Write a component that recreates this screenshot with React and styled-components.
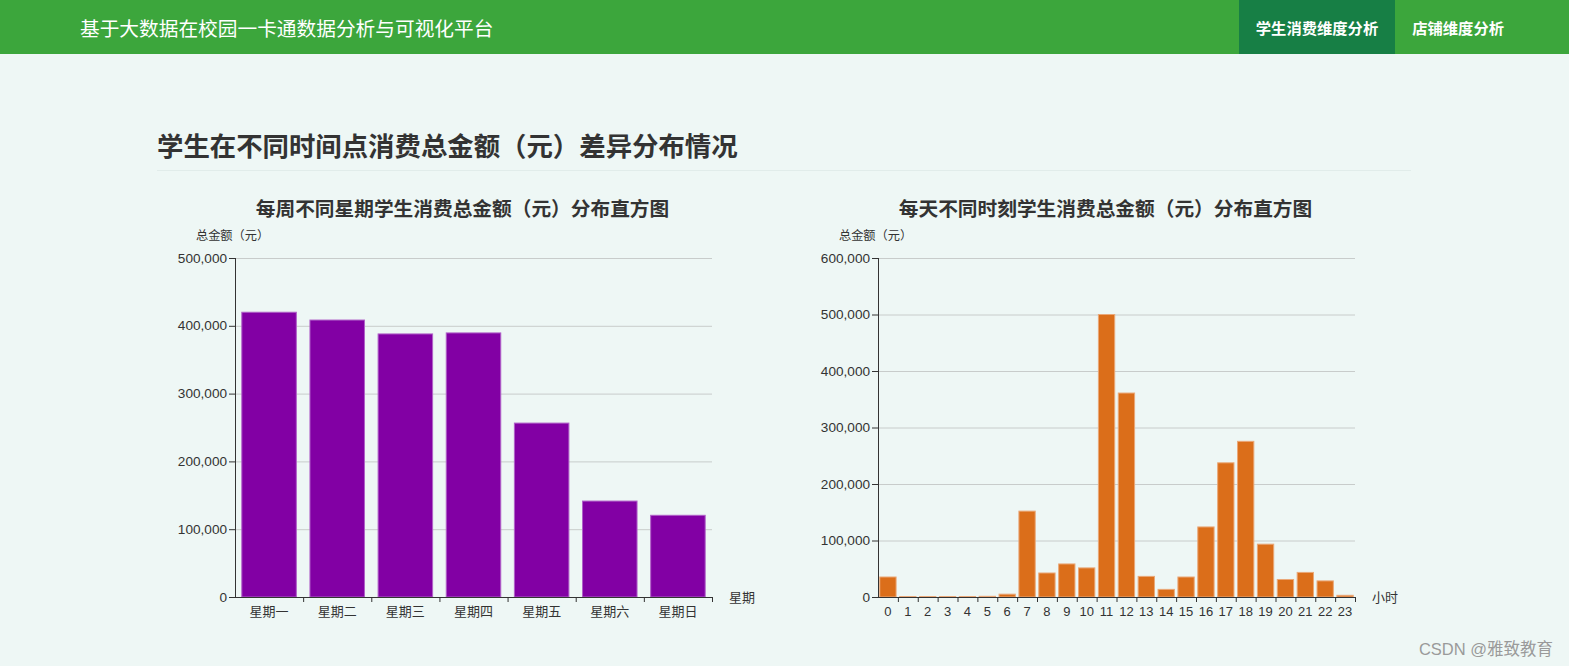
import React from "react";
import styled, { createGlobalStyle } from "styled-components";

const GlobalStyle = createGlobalStyle`
  body {
    margin: 0;
    background: #eef7f5;
    font-family: "Liberation Sans", "Noto Sans CJK SC", sans-serif;
    color: #333;
  }
`;

const Header = styled.header`
  height: 54px;
  background: #3ca63c;
  display: flex;
  align-items: center;
  justify-content: space-between;
  padding-left: 80px;
  padding-right: 48px;
`;

const Brand = styled.div`
  color: #fff;
  font-size: 19.7px;
  font-family: "Noto Sans CJK SC", sans-serif;
`;

const Nav = styled.nav`
  display: flex;
  height: 100%;
`;

const NavItem = styled.a`
  display: flex;
  align-items: center;
  padding: 0 17px;
  height: 100%;
  color: #fff;
  font-weight: bold;
  font-size: 15.3px;
  font-family: "Noto Sans CJK SC", sans-serif;
  background: ${(p) => (p.$active ? "#177f45" : "transparent")};
  cursor: pointer;
`;

const Main = styled.main`
  padding: 0 158px 0 157px;
`;

const Heading = styled.h1`
  margin: 73px 0 0;
  padding-bottom: 7px;
  font-size: 26.4px;
  line-height: 36px;
  font-weight: bold;
  font-family: "Noto Sans CJK SC", sans-serif;
  color: #333;
  border-bottom: 1px solid #e1ecea;
`;

const ChartRow = styled.div`
  display: grid;
  grid-template-columns: 643px 643px;
  margin-left: -16px;
  margin-top: 25px;
`;

const ChartBox = styled.div`
  display: flex;
  flex-direction: column;
`;

const ChartTitle = styled.h3`
  margin: 0;
  text-align: center;
  font-size: 19.7px;
  line-height: 24px;
  font-weight: bold;
  font-family: "Noto Sans CJK SC", sans-serif;
  color: #333;
`;

const Watermark = styled.div`
  position: absolute;
  right: 16px;
  top: 636px;
  font-size: 16.5px;
  color: #9a9a9a;
  font-family: "Liberation Sans", "Noto Sans CJK SC", sans-serif;
`;

const AX = 94;
const GX = 571;
const TOP = 38;
const BOT = 377;

const fmt = (n) => n.toLocaleString("en-US");

const BarChart = ({ data, max, step, color, stroke, xName, gap }) => {
  const band = (GX - AX) / data.length;
  const barW = band * (1 - gap);
  const ticks = [];
  for (let v = 0; v <= max; v += step) ticks.push(v);
  const y = (v) => BOT - (v / max) * (BOT - TOP);
  return (
    <svg width="643" height="420">
      <text x="55" y="17" fontSize="12.2" fill="#333" dominantBaseline="middle" fontFamily="Noto Sans CJK SC, sans-serif">
        总金额（元）
      </text>
      {ticks.map((t) => (
        <g key={t}>
          {t > 0 && <line x1={AX} x2={GX} y1={y(t) + 0.5} y2={y(t) + 0.5} stroke="#c8cccb" />}
          <line x1={AX - 6} x2={AX} y1={y(t) + 0.5} y2={y(t) + 0.5} stroke="#333" />
          <text x={AX - 8} y={y(t) + 1} fontSize="13.6" fill="#333" textAnchor="end" dominantBaseline="middle">
            {fmt(t)}
          </text>
        </g>
      ))}
      {data.map((d, i) => {
        const cx = AX + band * (i + 0.5);
        return (
          <rect
            key={d.label}
            x={cx - barW / 2}
            y={y(d.value)}
            width={barW}
            height={BOT - y(d.value)}
            fill={color}
            stroke={stroke}
            strokeWidth="1"
          />
        );
      })}
      <line x1={AX + 0.5} x2={AX + 0.5} y1={TOP} y2={BOT} stroke="#333" />
      <line x1={AX - 6} x2={GX} y1={BOT + 0.5} y2={BOT + 0.5} stroke="#333" />
      {data.map((d, i) => (
        <g key={"t" + d.label}>
          <line x1={AX + band * (i + 1) + 0.5} x2={AX + band * (i + 1) + 0.5} y1={BOT} y2={BOT + 5} stroke="#333" />
          <text
            x={AX + band * (i + 0.5)}
            y={BOT + 16}
            fontSize="13"
            fill="#333"
            textAnchor="middle"
            dominantBaseline="middle"
            fontFamily="Liberation Sans, Noto Sans CJK SC, sans-serif"
          >
            {d.label}
          </text>
        </g>
      ))}
      <text x={588} y={BOT + 1} fontSize="13" fill="#333" dominantBaseline="middle" fontFamily="Noto Sans CJK SC, sans-serif">
        {xName}
      </text>
    </svg>
  );
};

const weekData = [
  { label: "星期一", value: 420000 },
  { label: "星期二", value: 408500 },
  { label: "星期三", value: 388000 },
  { label: "星期四", value: 389500 },
  { label: "星期五", value: 256500 },
  { label: "星期六", value: 141500 },
  { label: "星期日", value: 120500 },
];

const hourValues = [
  35400, 800, 800, 800, 800, 1200, 5000, 152000, 42500, 58500, 51500, 500000,
  361000, 36500, 13500, 35400, 124000, 237500, 275500, 93500, 31000, 43500,
  28500, 3000,
];
const hourData = hourValues.map((value, i) => ({ label: String(i), value }));

const App = () => (
  <>
    <GlobalStyle />
    <Header>
      <Brand>基于大数据在校园一卡通数据分析与可视化平台</Brand>
      <Nav>
        <NavItem $active>学生消费维度分析</NavItem>
        <NavItem>店铺维度分析</NavItem>
      </Nav>
    </Header>
    <Main>
      <Heading>学生在不同时间点消费总金额（元）差异分布情况</Heading>
      <ChartRow>
        <ChartBox>
          <ChartTitle>每周不同星期学生消费总金额（元）分布直方图</ChartTitle>
          <BarChart data={weekData} max={500000} step={100000} color="#8200a4" stroke="#b060c8" xName="星期" gap={0.2} />
        </ChartBox>
        <ChartBox>
          <ChartTitle>每天不同时刻学生消费总金额（元）分布直方图</ChartTitle>
          <BarChart data={hourData} max={600000} step={100000} color="#db6e1a" stroke="#eaa878" xName="小时" gap={0.18} />
        </ChartBox>
      </ChartRow>
    </Main>
    <Watermark>CSDN @雅致教育</Watermark>
  </>
);

export default App;
